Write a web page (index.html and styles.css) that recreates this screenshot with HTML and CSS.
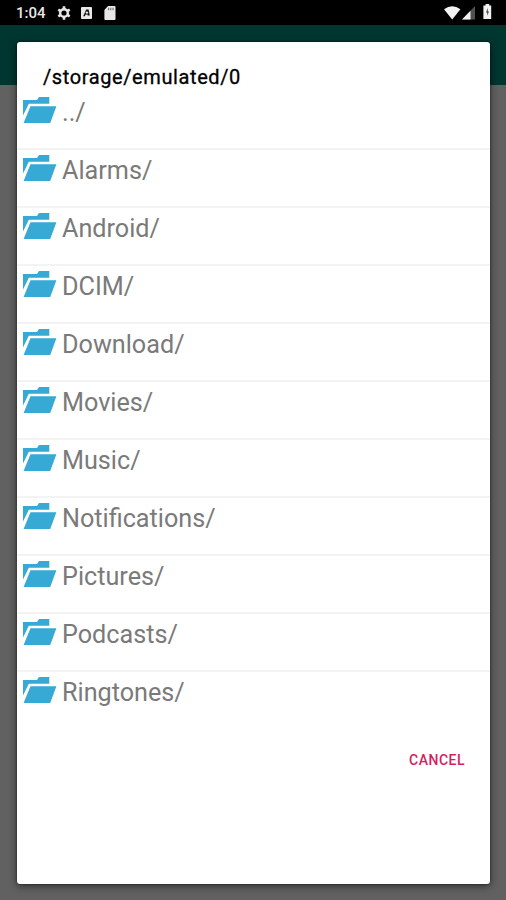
FILE: index.html
```html
<!DOCTYPE html>
<html lang="en">
<head>
    <meta charset="UTF-8">
    <meta name="viewport" content="width=device-width, initial-scale=1.0">
    <title>Choose folder</title>
    <link rel="stylesheet" href="styles.css">
</head>
<body>
    <svg class="defs" width="0" height="0">
        <symbol id="folder" viewBox="0 0 34 27">
            <path d="M0 18.5V3H14L16 0H26.3V6.8H5.8Z"/>
            <path d="M7.5 9.3H33.4L27.2 26H.6Z"/>
        </symbol>
    </svg>

    <div class="status-bar">
        <span class="clock">1:04</span>
        <svg class="gear" width="14" height="14" viewBox="0 0 14 14">
            <circle cx="7" cy="7" r="3.8" fill="none" stroke="#e8e8e8" stroke-width="2.4"/>
            <path d="M7 .3V3M7 11v2.7M1.3 3.7l2 1.2M10.7 9.1l2 1.2M1.3 10.3l2-1.2M10.7 4.9l2-1.2" stroke="#e8e8e8" stroke-width="2.6"/>
        </svg>
        <svg class="app" width="11" height="12" viewBox="0 0 11 12">
            <rect width="11" height="12" rx="1" fill="#e8e8e8"/>
            <path d="M2.2 9.2L5.2 2.6H7.6L8.8 8.4H6.8L6.4 7.6H4.6L3.8 9.2Z" fill="#111"/>
            <circle cx="5.9" cy="5.6" r="1.2" fill="#e8e8e8"/>
        </svg>
        <svg class="sd" width="12" height="14" viewBox="0 0 12 14">
            <path d="M4 0H10.5Q11.5 0 11.5 1V13Q11.5 14 10.5 14H1.4Q.4 14 .4 13V4Z" fill="#e8e8e8"/>
            <path d="M4.6 1.8V4.2M6.8 1.8V4.2M9 1.8V4.2" stroke="#777" stroke-width="1.2"/>
        </svg>
        <span class="spacer"></span>
        <svg class="wifi" width="17" height="14" viewBox="0 0 17 14">
            <path d="M0 3.2Q8.2-2.8 16.4 3.2L8.2 13.6Z" fill="#f2f2f2"/>
        </svg>
        <svg class="signal" width="14" height="14" viewBox="0 0 14 14">
            <path d="M13 0V13.5H0Z" fill="#505050"/>
            <path d="M8.5 4.7V13.5H0Z" fill="#f2f2f2"/>
        </svg>
        <svg class="battery" width="9" height="15" viewBox="0 0 9 15">
            <path d="M2.6 0H6.2V1.6H8.2V15H.4V1.6H2.6Z" fill="#f2f2f2"/>
            <path d="M4.8 4L3 8.4H4.2V11.8L6 7.4H4.8Z" fill="#444"/>
        </svg>
    </div>
    <div class="screen">
        <div class="dialog">
            <div class="title">/storage/emulated/0</div>
            <ul class="list">
                <li><svg class="folder"><use href="#folder"/></svg><span>../</span></li>
                <li><svg class="folder"><use href="#folder"/></svg><span>Alarms/</span></li>
                <li><svg class="folder"><use href="#folder"/></svg><span>Android/</span></li>
                <li><svg class="folder"><use href="#folder"/></svg><span>DCIM/</span></li>
                <li><svg class="folder"><use href="#folder"/></svg><span>Download/</span></li>
                <li><svg class="folder"><use href="#folder"/></svg><span>Movies/</span></li>
                <li><svg class="folder"><use href="#folder"/></svg><span>Music/</span></li>
                <li><svg class="folder"><use href="#folder"/></svg><span>Notifications/</span></li>
                <li><svg class="folder"><use href="#folder"/></svg><span>Pictures/</span></li>
                <li><svg class="folder"><use href="#folder"/></svg><span>Podcasts/</span></li>
                <li><svg class="folder"><use href="#folder"/></svg><span>Ringtones/</span></li>
            </ul>
            <div class="actions">
                <button class="cancel">CANCEL</button>
            </div>
        </div>
    </div>
</body>
</html>
```

FILE: styles.css
```css
* {
    box-sizing: border-box;
}
body {
    margin: 0;
    height: 900px;
    overflow: hidden;
    display: flex;
    flex-direction: column;
    font-family: Roboto, sans-serif;
    background: #616161;
}
.defs {
    display: none;
}
.status-bar {
    display: flex;
    align-items: center;
    height: 25px;
    flex: none;
    padding: 0 14px 0 16px;
    background: #000;
}
.clock {
    width: 41px;
    font-size: 15px;
    font-weight: 500;
    line-height: 25px;
    padding-top: 2px;
    color: #e8e8e8;
}
.app {
    margin-left: 10px;
}
.sd {
    margin-left: 12px;
}
.spacer {
    flex: 1;
}
.signal {
    margin: 1px 7px 0 1px;
}
.battery {
    margin-top: -2px;
}
.screen {
    flex: 1;
    padding: 17px 16px 16px 17px;
    background: linear-gradient(#003630 60px, #616161 60px);
}
.dialog {
    height: 842px;
    padding-top: 24px;
    background: #fff;
    border-radius: 3px;
    box-shadow: 0 2px 8px rgba(0, 0, 0, 0.55), 0 0 2px rgba(0, 0, 0, 0.6);
}
.title {
    height: 26px;
    padding-left: 26px;
    font-size: 20px;
    font-weight: 400;
    line-height: 23px;
    letter-spacing: 0.6px;
    color: #000;
    -webkit-text-stroke: 0.3px #000;
}
.list {
    margin: 0;
    padding: 0;
    list-style: none;
}
.list li {
    display: flex;
    align-items: flex-start;
    height: 58px;
    padding: 5px 0 0 6px;
    border-bottom: 2px solid #f3f3f3;
    font-size: 25.2px;
    line-height: 32px;
    color: #7a7a7a;
}
.list li:last-child {
    border-bottom: none;
}
.folder {
    width: 34px;
    height: 27px;
    margin-right: 5px;
    fill: #36a9d4;
}
.actions {
    display: flex;
    justify-content: flex-end;
    padding: 20px 25px 0 0;
}
.cancel {
    padding: 0;
    border: none;
    background: none;
    font-family: inherit;
    font-size: 14px;
    font-weight: 500;
    line-height: 20px;
    letter-spacing: 0.5px;
    color: #d81b60;
}
```
